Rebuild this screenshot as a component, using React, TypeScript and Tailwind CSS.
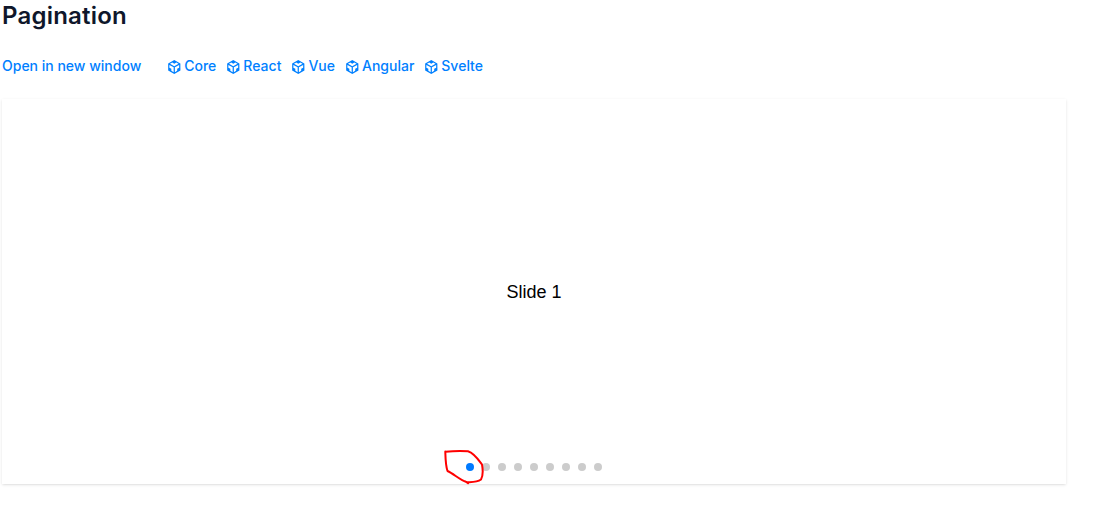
import React from "react";

const sandboxes = ["Core", "React", "Vue", "Angular", "Svelte"];

const SandboxIcon = () => (
  <svg viewBox="0 0 24 24" fill="currentColor" className="mr-[2px] mt-px h-3.5 w-3.5 shrink-0">
    <path d="M2 6l10.455-6L22.91 6 23 17.95 12.455 24 2 18V6zm2.088 2.481v4.757l3.345 1.86v3.516l3.972 2.296v-8.272L4.088 8.481zm16.739 0l-7.317 4.157v8.272l3.972-2.296V15.1l3.345-1.861V8.48zM5.134 6.601l7.303 4.144 7.32-4.18-3.871-2.197-3.41 1.945-3.43-1.968L5.133 6.6z" />
  </svg>
);

const Slider = () => {
  return (
    <div className="relative mt-[23px] flex h-[385px] w-[1064px] flex-col bg-white shadow">
      <div className="flex flex-1 items-center justify-center font-['Liberation_Sans',Arial,sans-serif] text-lg text-black">
        Slide 1
      </div>

      {/* Bullets */}
      <div className="absolute inset-x-0 bottom-[13px] flex justify-center gap-2">
        {Array.from({ length: 9 }, (_, i) => (
          <span
            key={i}
            className={`h-2 w-2 rounded-full ${i === 0 ? "bg-[#007aff]" : "bg-[#cccccc]"}`}
          />
        ))}
      </div>

      {/* Hand-drawn mark around the active bullet */}
      <svg
        viewBox="0 0 42 38"
        fill="none"
        stroke="#ff0000"
        strokeWidth="2"
        strokeLinecap="round"
        strokeLinejoin="round"
        className="absolute left-[440px] top-[348px] h-[38px] w-[42px]"
      >
        <path d="M3.5 4.8 C10 4 18 3.6 26 4.2 C32 6 36 12 40 17.5 C41 23 41 29 39 32.5 C35 35.5 30 35 25 35.2 C18 33 12 27 5.5 24 C3.5 18 3.5 11 3.3 4.5 M23.5 34.5 L26 36.3" />
      </svg>
    </div>
  );
};

const App = () => {
  return (
    <main className="min-h-[513px] bg-white pl-0.5 font-['Inter',sans-serif]">
      <h2 className="text-2xl font-semibold tracking-[0.2px] text-slate-900">Pagination</h2>

      {/* Demo links */}
      <div className="mt-6 flex h-5 items-center text-sm font-medium text-[#0080ff]">
        <a href="#" className="mr-[26px]">
          Open in new window
        </a>
        <div className="flex gap-2.5">
          {sandboxes.map((name) => (
            <a key={name} href="#" className="flex items-center gap-px">
              <SandboxIcon />
              {name}
            </a>
          ))}
        </div>
      </div>

      <Slider />
    </main>
  );
};

export default App;
